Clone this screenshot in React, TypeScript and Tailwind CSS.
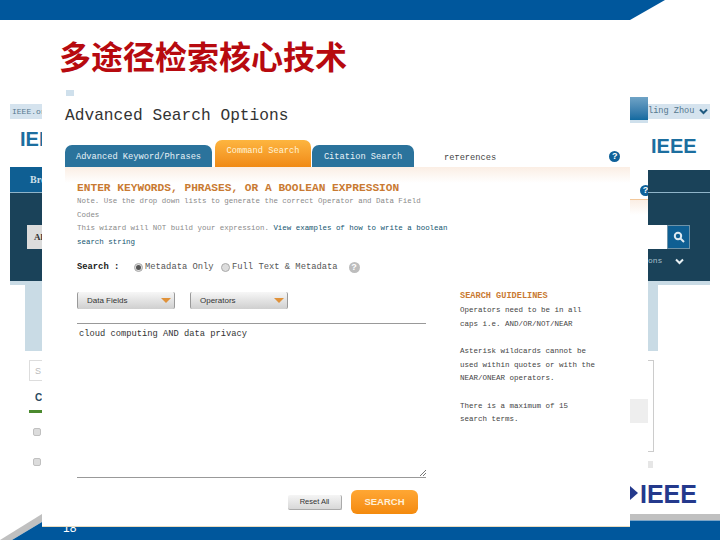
import React from "react";

const Help = ({ grey }: { grey?: boolean }) => (
  <span className={`flex h-[11px] w-[11px] shrink-0 items-center justify-center rounded-full text-[9px] leading-none font-bold text-white font-['Liberation_Sans',sans-serif] ${grey ? "bg-[#bdbdbd]" : "bg-[#0f6199]"}`}>?</span>
);

const Radio = ({ on }: { on?: boolean }) => (
  <span className="flex h-[9px] w-[9px] shrink-0 items-center justify-center rounded-full border border-[#aaa] bg-[#ddd]">
    {on && <span className="h-[5px] w-[5px] rounded-full bg-[#555]" />}
  </span>
);

const Drop = ({ label }: { label: string }) => (
  <div className="flex h-[17px] w-[98px] items-center justify-between rounded-[2px] border-r border-l border-[#999] bg-gradient-to-b from-[#f7f7f7] to-[#cfcfcf] pr-[3px] pl-[9px] text-[8px] text-[#333] font-['Liberation_Sans',sans-serif]">
    <span>{label}</span>
    <svg width="10" height="5" viewBox="0 0 10 5"><path d="M0 0H10L5 5Z" fill="#e0923a" /></svg>
  </div>
);

const Tab = ({ label, w, active }: { label: string; w: string; active?: boolean }) => (
  <div className={`flex items-center justify-center rounded-t-[7px] ${w} ${active ? "h-[27px] bg-gradient-to-b from-[#fdb53f] to-[#f08a14] pb-[3px] text-[#fff3d8]" : "h-[22px] bg-[#2b739c] pt-[3px] text-[#e8f2f7]"} text-[8.7px]`}>
    {label}
  </div>
);

export default function App() {
  return (
    <div className="relative flex h-[540px] w-[720px] flex-col overflow-hidden bg-white font-['Liberation_Mono','Noto_Sans_CJK_SC',monospace]">
      <div className="h-[20px] w-full shrink-0 bg-[#00579c] [clip-path:polygon(0_0,665px_0,630px_20px,0_20px)]" />
      <h1 className="mt-[20px] h-[36px] shrink-0 pl-[59px] text-[32px] leading-[36px] font-bold text-[#b70a0f] font-['Liberation_Sans','Noto_Sans_CJK_SC',sans-serif]">多途径检索核心技术</h1>
      <svg className="absolute top-[513px] left-0" width="720" height="27" viewBox="0 0 720 27">
        <path d="M0 27L42 1V9L12 27Z" fill="#c0c0c0" />
        <rect x="630" y="1" width="90" height="6" fill="#c0c0c0" />
        <path d="M12 27L42 9V14H630V8H720V27Z" fill="#00579c" />
        <rect x="630" y="7" width="90" height="1" fill="#7aa5c8" />
      </svg>
      <span className="absolute top-[519px] left-[63px] text-[12px] text-white font-['Liberation_Sans',sans-serif]">18</span>

      <div className="relative mt-[12px] flex h-[439px] shrink-0">
        {/* page behind, left */}
        <div className="flex w-[42px] shrink-0 flex-col overflow-hidden">
          <div className="mt-[16px] ml-[10px] h-[15px] overflow-hidden bg-[#d5e3ee] pl-[2px] text-[8px] leading-[15px] whitespace-nowrap text-[#55788f]">IEEE.org</div>
          <div className="mt-[11px] ml-[20px] h-[18px] overflow-hidden text-[20px] leading-[18px] font-bold text-[#1c6e9f] font-['Liberation_Sans',sans-serif]">IEEE</div>
          <div className="mt-[19px] ml-[10px] h-[26px] overflow-hidden border-b border-[#8fb4c9] bg-[#0f5f93] pl-[20px] text-[10px] leading-[26px] font-bold whitespace-nowrap text-[#cfe0ea] font-['Liberation_Serif',serif]">Browse</div>
          <div className="ml-[10px] h-[88px] bg-[#1a4259] pt-[32px] pl-[17px]">
            <div className="h-[24px] bg-[#dcdcdc] pl-[7px] text-[9px] leading-[24px] font-bold text-[#333] font-['Liberation_Serif',serif]">Al</div>
          </div>
          <div className="ml-[10px] h-[4px] bg-[#c9dbe5]" />
          <div className="ml-[25px] h-[66px] bg-[#c9dbe5]" />
          <div className="mt-[9px] ml-[29px] h-[21px] rounded-l-[1px] border-t border-b border-l border-[#ddd] pl-[5px] text-[9px] leading-[20px] text-[#bbb] font-['Liberation_Sans',sans-serif]">S</div>
          <div className="mt-[11px] ml-[35px] h-[12px] text-[10px] leading-[12px] font-bold text-[#2a4a60] font-['Liberation_Sans',sans-serif]">Ca</div>
          <div className="mt-[6px] ml-[29px] h-[3px] bg-[#4b8a2f]" />
          <div className="mt-[15px] ml-[33px] h-[8px] w-[8px] rounded-[2px] border border-[#c0c0c0] bg-[#dcdcdc]" />
          <div className="mt-[22px] ml-[33px] h-[8px] w-[8px] rounded-[2px] border border-[#c0c0c0] bg-[#dcdcdc]" />
        </div>

        {/* dialog */}
        <div className="z-10 flex h-[439px] w-[588px] shrink-0 flex-col border-b border-[#e8dcc0] bg-white">
          <div className="mt-[2px] ml-[24px] h-[6px] w-[8px] bg-[#cfe0ec]" />
          <div className="mt-[11px] ml-[23px] h-[18px] text-[16.2px] leading-[18px] text-[#333]">Advanced Search Options</div>
          <div className="mt-[15px] ml-[23px] flex h-[27px] items-end">
            <Tab label="Advanced Keyword/Phrases" w="w-[147px]" />
            <div className="w-[3px]" />
            <Tab label="Command Search" w="w-[96px]" active />
            <div className="w-px" />
            <Tab label="Citation Search" w="w-[102px]" />
            <div className="ml-[30px] h-[12px] overflow-hidden text-[8.7px] leading-[7px] text-[#444]">references</div>
            <div className="ml-[113px] pb-[5px]"><Help /></div>
          </div>
          <div className="ml-[23px] flex flex-1 flex-col bg-[linear-gradient(#fbeee4,#fff_16px)] pl-[12px]">
            <div className="mt-[14px] h-[14px] text-[11.2px] leading-[14px] font-bold whitespace-nowrap text-[#c97a32]">ENTER KEYWORDS, PHRASES, OR A BOOLEAN EXPRESSION</div>
            <div className="text-[7.45px] leading-[13.6px] whitespace-nowrap text-[#8a8a8a]">
              <div>Note. Use the drop down lists to generate the correct Operator and Data Field</div>
              <div>Codes</div>
              <div>This wizard will NOT build your expression. <span className="text-[#14556f]">View examples of how to write a boolean</span></div>
              <div className="text-[#14556f]">search string</div>
            </div>
            <div className="mt-[11px] flex h-[14px] items-center text-[8.8px] whitespace-nowrap text-[#555]">
              <span className="w-[57px] font-bold text-[#222]">Search :</span>
              <Radio on />
              <span className="ml-[2px] w-[76px]">Metadata Only</span>
              <Radio />
              <span className="ml-[2px]">Full Text &amp; Metadata</span>
              <span className="ml-[11px]"><Help grey /></span>
            </div>
            <div className="flex">
              <div className="flex w-[349px] shrink-0 flex-col">
                <div className="mt-[18px] flex gap-[15px]">
                  <Drop label="Data Fields" />
                  <Drop label="Operators" />
                </div>
                <div className="relative mt-[14px] h-[155px] border-t border-b border-[#999] pt-[4px] pl-[2px] text-[8.75px] leading-[12px] text-[#333]">
                  cloud computing AND data privacy
                  <svg className="absolute right-0 bottom-[1px]" width="6" height="6" viewBox="0 0 6 6"><path d="M0 6L6 0M3 6L6 3" stroke="#777" strokeWidth="1" /></svg>
                </div>
                <div className="mt-[12px] flex items-center justify-end gap-[9px] pr-[8px]">
                  <div className="flex h-[15px] w-[54px] items-center justify-center rounded-[2px] border-r border-b border-[#aaa] bg-gradient-to-b from-[#f5f5f5] to-[#d8d8d8] text-[7.5px] text-[#333] font-['Liberation_Sans',sans-serif]">Reset All</div>
                  <div className="flex h-[24px] w-[67px] items-center justify-center rounded-[6px] bg-gradient-to-b from-[#ffa733] to-[#f48a0c] text-[9.5px] font-bold text-[#fff0d8] font-['Liberation_Sans',sans-serif]">SEARCH</div>
                </div>
              </div>
              <div className="mt-[16px] ml-[34px] text-[7.5px] leading-[13.6px] whitespace-nowrap text-[#444]">
                <div className="h-[14px] text-[8.6px] font-bold text-[#c97a32]">SEARCH GUIDELINES</div>
                <div>Operators need to be in all</div>
                <div>caps  i.e. AND/OR/NOT/NEAR</div>
                <div className="h-[13.6px]" />
                <div>Asterisk wildcards cannot be</div>
                <div>used within quotes or with the</div>
                <div>NEAR/ONEAR operators.</div>
                <div className="h-[13.6px]" />
                <div>There is a maximum of 15</div>
                <div>search terms.</div>
              </div>
            </div>
          </div>
        </div>

        {/* page behind, right */}
        <div className="flex w-[18px] shrink-0 flex-col">
          <div className="mt-[9px] h-[23px] bg-gradient-to-b from-[#6fa3c6] to-[#0f6aa0]" />
          <div className="h-[3px] bg-[#cfe0ec]" />
          <div className="mt-[62px] ml-[10px] h-[11px] w-[8px] overflow-hidden"><Help /></div>
          <div className="mt-[3px] h-[16px] border-t border-[#f2c79a] bg-gradient-to-b from-[#fbeee4] to-white" />
          <div className="mt-[184px] h-[24px] bg-[#eeeeee]" />
          <div className="mt-[60px] flex h-[19px] items-center">
            <svg width="8" height="14" viewBox="0 0 8 14"><path d="M0 0L8 7L0 14Z" fill="#24398c" /></svg>
          </div>
        </div>
        <div className="flex w-[72px] shrink-0 flex-col">
          <div className="mt-[16px] flex h-[15px] w-[62px] items-center justify-between bg-[#d5e3ee] pr-[2px] text-[8.6px] whitespace-nowrap text-[#55788f]">
            <span>ling Zhou</span>
            <svg width="9" height="7" viewBox="0 0 9 7"><path d="M1 1.5L4.5 5L8 1.5" fill="none" stroke="#1f5a80" strokeWidth="2" /></svg>
          </div>
          <div className="mt-[19px] h-[16px] w-[62px] pl-[3px] text-[20px] leading-[16px] font-bold text-[#1c6e9f] font-['Liberation_Sans',sans-serif]">IEEE</div>
          <div className="mt-[16px] h-[23px] w-[62px] border-b border-[#8fb4c9] bg-[#1a4259]" />
          <div className="flex h-[88px] w-[62px] flex-col bg-[#1a4259] pt-[32px]">
            <div className="flex h-[24px]">
              <div className="w-[19px] bg-white" />
              <div className="flex w-[23px] items-center justify-center border border-[#6f93a8] bg-[#0f5f93]">
                <svg width="12" height="12" viewBox="0 0 12 12"><circle cx="5" cy="5" r="3.2" fill="none" stroke="#dfeaf1" strokeWidth="2" /><path d="M7.5 7.5L11 11" stroke="#dfeaf1" strokeWidth="2" /></svg>
              </div>
            </div>
            <div className="mt-[5px] flex h-[14px] items-center text-[8px] text-[#a9c0cd]">
              <span className="w-[27px]">ons</span>
              <svg width="9" height="7" viewBox="0 0 9 7"><path d="M1 1.5L4.5 5L8 1.5" fill="none" stroke="#e8f0f4" strokeWidth="2" /></svg>
            </div>
          </div>
          <div className="h-[4px] w-[62px] bg-[#c9dbe5]" />
          <div className="h-[66px] w-[10px] bg-[#c9dbe5]" />
          <div className="mt-[9px] h-[92px] w-[6px] border-t border-r border-b border-[#ccc]" />
          <div className="mt-[9px] h-[7px] w-[5px] bg-[#e6e6e6]" />
          <div className="mt-[17px] -ml-[8px] h-[19px] text-[25px] leading-[19px] font-bold text-[#24398c] font-['Liberation_Sans',sans-serif]">IEEE</div>
        </div>
      </div>
    </div>
  );
}
